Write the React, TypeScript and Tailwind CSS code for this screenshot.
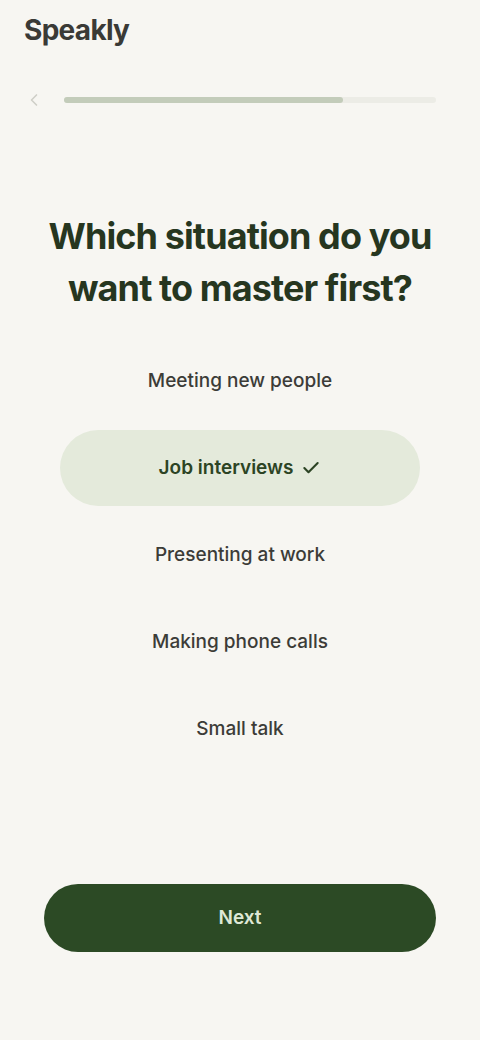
import { ChevronLeft, Check } from 'lucide-react'

const options = [
  'Meeting new people',
  'Job interviews',
  'Presenting at work',
  'Making phone calls',
  'Small talk',
]

const selected = 1

export default function App() {
  return (
    <div
      className="flex h-[1040px] w-[480px] flex-col bg-[#f7f6f2] text-[#1f2a1c]"
      style={{ fontFamily: 'Inter, "Noto Sans", sans-serif' }}
    >
      <header className="flex h-[60px] items-center px-6">
        <span className="text-[28px] font-bold tracking-tight text-[#3a3a36]">Speakly</span>
      </header>

      <div className="mt-[30px] flex items-center gap-5 pl-6 pr-11">
        <ChevronLeft className="h-5 w-5 text-[#cfcfc8]" strokeWidth={2} />
        <div className="h-[6px] flex-1 rounded-full bg-[#ecece6]">
          <div className="h-full w-[75%] rounded-full bg-[#c3ccba]" />
        </div>
      </div>

      <h1 className="mt-[100px] px-8 text-center text-[36px] font-bold leading-[52px] tracking-tight text-[#26361f]">
        Which situation do you want to master first?
      </h1>

      <ul className="mt-[29px] flex flex-col gap-[11px] px-[60px]">
        {options.map((label, i) => (
          <li key={label}>
            <button
              type="button"
              className={
                i === selected
                  ? 'flex h-[76px] w-full items-center justify-center gap-2 rounded-full bg-[#e4eadb] text-[19px] font-semibold text-[#2c4424]'
                  : 'flex h-[76px] w-full items-center justify-center rounded-full text-[19px] font-medium text-[#3c3c38]'
              }
            >
              {label}
              {i === selected && <Check className="h-5 w-5" strokeWidth={2.5} />}
            </button>
          </li>
        ))}
      </ul>

      <div className="mt-auto px-11 pb-[88px]">
        <button
          type="button"
          className="flex h-[68px] w-full items-center justify-center rounded-full bg-[#2c4a25] text-[19px] font-semibold text-[#dfe8d6]"
        >
          Next
        </button>
      </div>
    </div>
  )
}
